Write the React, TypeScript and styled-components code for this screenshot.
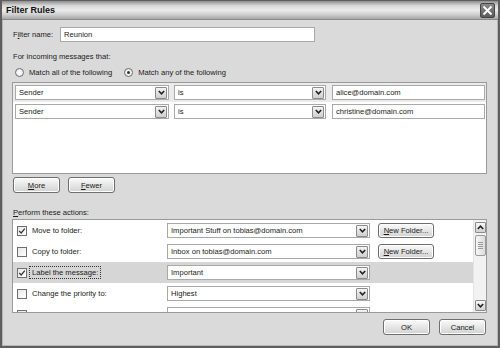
import React from "react";
import styled, { createGlobalStyle } from "styled-components";

const Global = createGlobalStyle`
  html, body {
    margin: 0;
    padding: 0;
    background: #d9d9d9;
  }
  * {
    box-sizing: border-box;
  }
`;

const Window = styled.div`
  width: 500px;
  height: 348px;
  display: flex;
  flex-direction: column;
  background: #dadada;
  border: 2px solid #5e5e5e;
  border-top-width: 1px;
  box-shadow: inset 0 0 0 1px #b4b4b4;
  font-family: "Liberation Sans", Arial, sans-serif;
  font-size: 7.6px;
  color: #1a1a1a;
`;

const TitleBar = styled.div`
  height: 19px;
  flex: none;
  display: flex;
  align-items: center;
  justify-content: space-between;
  padding: 0 3px 0 4px;
  background: linear-gradient(#8e8e8e 0%, #d6d6d6 25%, #ececec 50%, #d0d0d0 75%, #a6a6a6 100%);
  border-bottom: 1px solid #8a8a8a;
`;

const Title = styled.span`
  font-weight: bold;
  font-size: 9px;
  color: #111;
`;

const CloseButton = styled.div`
  width: 15px;
  height: 15px;
  border-radius: 2px;
  background: linear-gradient(#8a8a8a, #5c5c5c);
  border: 1px solid #444;
  display: flex;
  align-items: center;
  justify-content: center;
`;

const Body = styled.div`
  flex: 1;
  display: flex;
  flex-direction: column;
  padding: 0 11px 0 10px;
`;

const NameRow = styled.div`
  display: flex;
  align-items: center;
  margin-top: 7px;
  height: 14px;
`;

const NameLabel = styled.span`
  width: 48px;
  padding-left: 1px;
`;

const TextBox = styled.div<{ $w?: number; $ml?: number }>`
  width: ${(p) => (p.$w ? `${p.$w}px` : "auto")};
  margin-left: ${(p) => p.$ml ?? 0}px;
  height: 15px;
  flex: none;
  background: #fff;
  border: 1px solid #a9a9a9;
  padding: 0 3px;
  display: flex;
  align-items: center;
  white-space: nowrap;
  overflow: hidden;
`;

const SectionLabel = styled.div<{ $top: number }>`
  margin-top: ${(p) => p.$top}px;
  height: 10px;
  line-height: 10px;
  padding-left: 1px;
`;

const RadioRow = styled.div`
  margin-top: 4px;
  height: 12px;
  display: flex;
  align-items: center;
  padding-left: 3px;
`;

const RadioOption = styled.label`
  display: flex;
  align-items: center;
  gap: 5px;
  margin-right: 12px;
`;

const Radio = styled.span<{ $on?: boolean }>`
  width: 9px;
  height: 9px;
  border-radius: 50%;
  border: 1px solid #6f6f6f;
  background: radial-gradient(#ffffff, #e2e2e2);
  display: flex;
  align-items: center;
  justify-content: center;
  &::after {
    content: "";
    width: 3px;
    height: 3px;
    border-radius: 50%;
    background: ${(p) => (p.$on ? "#333" : "transparent")};
  }
`;

const CriteriaBox = styled.div`
  margin-top: 4px;
  height: 92px;
  background: #fff;
  border: 1px solid #9a9a9a;
  flex: none;
`;

const CriteriaRow = styled.div<{ $selected?: boolean }>`
  height: 19px;
  display: flex;
  align-items: flex-start;
  padding: 2px 3px 0 2px;
  background: ${(p) => (p.$selected ? "#ebebeb" : "#fff")};
`;

const SelectBox = styled.div<{ $w: number; $ml?: number }>`
  width: ${(p) => p.$w}px;
  margin-left: ${(p) => p.$ml ?? 0}px;
  height: 15px;
  flex: none;
  background: #fff;
  border: 1px solid #a9a9a9;
  display: flex;
  align-items: center;
  justify-content: space-between;
  padding: 0 1px 0 3px;
  white-space: nowrap;
  overflow: hidden;
`;

const DropButton = styled.span`
  width: 12px;
  height: 12px;
  flex: none;
  border: 1px solid #8c8c8c;
  border-radius: 1px;
  background: linear-gradient(#f4f4f4, #cfcfcf);
  display: flex;
  align-items: center;
  justify-content: center;
`;

const ButtonRow = styled.div`
  margin-top: 3px;
  display: flex;
  gap: 8px;
  padding-left: 1px;
`;

const Button = styled.div<{ $w: number }>`
  width: ${(p) => p.$w}px;
  height: 16px;
  flex: none;
  border: 1px solid #6e6e6e;
  border-radius: 3px;
  background: linear-gradient(#fbfbfb, #e6e6e6 50%, #d2d2d2);
  box-shadow: inset 0 0 0 1px #fff;
  display: flex;
  align-items: center;
  justify-content: center;
  u {
    text-decoration: underline;
  }
`;

const ActionsBox = styled.div`
  margin-top: 1px;
  height: 94px;
  flex: none;
  background: #fff;
  border: 1px solid #9a9a9a;
  display: flex;
  overflow: hidden;
`;

const ActionList = styled.div`
  flex: 1;
  overflow: hidden;
`;

const ActionRow = styled.div<{ $selected?: boolean }>`
  height: 21px;
  display: grid;
  grid-template-columns: 142px 203px 56px;
  column-gap: 8px;
  align-items: start;
  padding: 3px 0 0 4px;
  background: ${(p) => (p.$selected ? "#d6d6d6" : "#fff")};
`;

const CheckCell = styled.div`
  display: flex;
  align-items: center;
  gap: 5px;
  height: 15px;
`;

const Checkbox = styled.span`
  width: 10px;
  height: 10px;
  flex: none;
  border: 1px solid #6f6f6f;
  background: linear-gradient(135deg, #e6e6e6, #ffffff);
  display: flex;
  align-items: center;
  justify-content: center;
`;

const ActionLabel = styled.span<{ $focus?: boolean }>`
  padding: 1px 2px;
  margin-left: -2px;
  outline: ${(p) => (p.$focus ? "1px dotted #333" : "none")};
  outline-offset: 0;
  white-space: nowrap;
`;

const SmallButton = styled(Button)`
  height: 15px;
`;

const ScrollBar = styled.div`
  width: 13px;
  flex: none;
  background: #f2f2f2;
  border-left: 1px solid #e4e4e4;
  display: flex;
  flex-direction: column;
  align-items: center;
  justify-content: space-between;
  padding: 2px 0 1px;
`;

const ScrollTop = styled.div`
  display: flex;
  flex-direction: column;
  align-items: center;
  gap: 2px;
`;

const ScrollArrow = styled.span`
  width: 11px;
  height: 11px;
  border: 1px solid #8a8a8a;
  border-radius: 1px;
  background: linear-gradient(#f8f8f8, #d2d2d2);
  display: flex;
  align-items: center;
  justify-content: center;
`;

const Thumb = styled.span`
  width: 11px;
  height: 21px;
  border: 1px solid #9a9a9a;
  border-radius: 2px;
  background: linear-gradient(90deg, #f6f6f6, #dcdcdc);
  display: flex;
  flex-direction: column;
  align-items: center;
  justify-content: center;
  gap: 1px;
  span {
    width: 5px;
    height: 1px;
    background: #9a9a9a;
  }
`;

const Footer = styled.div`
  margin-top: 6px;
  display: flex;
  justify-content: flex-end;
  gap: 9px;
  padding-right: 1px;
`;

const Chevron = ({ up }: { up?: boolean }) => (
  <svg width="7" height="5" viewBox="0 0 7 5">
    <polyline
      points={up ? "0.8,4 3.5,1.2 6.2,4" : "0.8,1 3.5,3.8 6.2,1"}
      fill="none"
      stroke="#222"
      strokeWidth="1.6"
    />
  </svg>
);

const Tick = () => (
  <svg width="8" height="8" viewBox="0 0 8 8">
    <polyline points="1.2,4 3.2,6 6.8,1.6" fill="none" stroke="#333" strokeWidth="1.2" />
  </svg>
);

const Select = ({ w, value, ml }: { w: number; value: string; ml?: number }) => (
  <SelectBox $w={w} $ml={ml}>
    <span>{value}</span>
    <DropButton>
      <Chevron />
    </DropButton>
  </SelectBox>
);

const criteria = [
  { field: "Sender", op: "is", value: "alice@domain.com" },
  { field: "Sender", op: "is", value: "christine@domain.com" },
];

const actions = [
  { label: "Move to folder:", value: "Important Stuff on tobias@domain.com", checked: true, folder: true },
  { label: "Copy to folder:", value: "Inbox on tobias@domain.com", checked: false, folder: true },
  { label: "Label the message:", value: "Important", checked: true, selected: true },
  { label: "Change the priority to:", value: "Highest", checked: false },
  { label: "Set Quick Flag to:", value: "Red", checked: false },
];

export default function App() {
  return (
    <>
      <Global />
      <Window>
        <TitleBar>
          <Title>Filter Rules</Title>
          <CloseButton>
            <svg width="11" height="11" viewBox="0 0 11 11">
              <path d="M1.5 1.5 L9.5 9.5 M9.5 1.5 L1.5 9.5" stroke="#fff" strokeWidth="1.8" />
            </svg>
          </CloseButton>
        </TitleBar>
        <Body>
          <NameRow>
            <NameLabel>
              F<u>i</u>lter name:
            </NameLabel>
            <TextBox $w={255}>Reunion</TextBox>
          </NameRow>

          <SectionLabel $top={11}>For incoming messages that:</SectionLabel>
          <RadioRow>
            <RadioOption>
              <Radio />
              Match all of the following
            </RadioOption>
            <RadioOption>
              <Radio $on />
              Match any of the following
            </RadioOption>
          </RadioRow>

          <CriteriaBox>
            {criteria.map((c, i) => (
              <CriteriaRow key={i} $selected={i === 0}>
                <Select w={154} value={c.field} />
                <Select w={152} value={c.op} ml={5} />
                <TextBox $w={153} $ml={6}>
                  {c.value}
                </TextBox>
              </CriteriaRow>
            ))}
          </CriteriaBox>

          <ButtonRow>
            <Button $w={47}>
              <span>
                <u>M</u>ore
              </span>
            </Button>
            <Button $w={47}>
              <span>
                <u>F</u>ewer
              </span>
            </Button>
          </ButtonRow>

          <SectionLabel $top={15}>
            <u>P</u>erform these actions:
          </SectionLabel>
          <ActionsBox>
            <ActionList>
              {actions.map((a, i) => (
                <ActionRow key={i} $selected={a.selected}>
                  <CheckCell>
                    <Checkbox>{a.checked && <Tick />}</Checkbox>
                    <ActionLabel $focus={a.selected}>{a.label}</ActionLabel>
                  </CheckCell>
                  <Select w={203} value={a.value} />
                  {a.folder && (
                    <SmallButton $w={56}>
                      <span>
                        <u>N</u>ew Folder...
                      </span>
                    </SmallButton>
                  )}
                </ActionRow>
              ))}
            </ActionList>
            <ScrollBar>
              <ScrollTop>
                <ScrollArrow>
                  <Chevron up />
                </ScrollArrow>
                <Thumb>
                  <span />
                  <span />
                  <span />
                  <span />
                </Thumb>
              </ScrollTop>
              <ScrollArrow>
                <Chevron />
              </ScrollArrow>
            </ScrollBar>
          </ActionsBox>

          <Footer>
            <Button $w={47}>OK</Button>
            <Button $w={47}>Cancel</Button>
          </Footer>
        </Body>
      </Window>
    </>
  );
}
